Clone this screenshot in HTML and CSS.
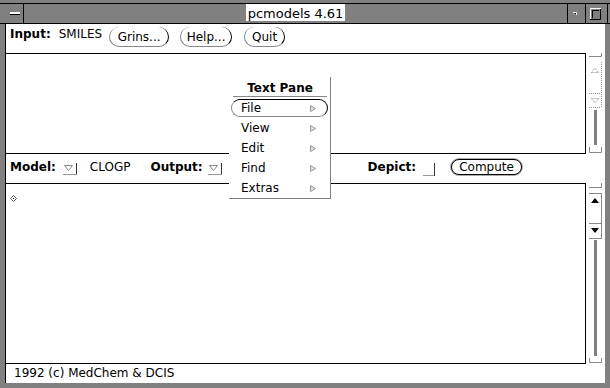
FILE: index.html
```html
<!DOCTYPE html>
<html lang="en">

<head>
  <meta charset="UTF-8">
  <title>pcmodels 4.61</title>
  <link rel="stylesheet" href="styles.css">
</head>

<body>
  <div class="window">
    <div class="titlebar">
      <div class="tb-row">
        <div class="tb-box tb-menu">
          <svg width="23" height="19" viewBox="0 0 23 19">
            <rect x="10" y="8" width="10" height="2" fill="#fff" />
            <line x1="10" y1="10.5" x2="20" y2="10.5" stroke="#000" />
          </svg>
        </div>
        <div class="tb-title"><span>pcmodels 4.61</span></div>
        <div class="tb-box tb-small">
          <svg width="17" height="19" viewBox="0 0 17 19">
            <polyline points="5,8.5 8.5,8.5 8.5,11" fill="none" stroke="#fff" />
            <rect x="7" y="9" width="1" height="1" fill="#000" />
          </svg>
        </div>
        <div class="tb-box tb-full">
          <svg width="21" height="19" viewBox="0 0 21 19">
            <polyline points="4.5,15 4.5,4.5 15,4.5" fill="none" stroke="#fff" />
            <polyline points="14.5,5 14.5,15.5 4,15.5" fill="none" stroke="#000" />
            <polyline points="6.5,14 6.5,6.5 13,6.5" fill="none" stroke="#000" />
          </svg>
        </div>
      </div>
    </div>

    <div class="client">
      <div class="panel panel-input">
        <span class="label">Input:</span>
        <span class="value value-smiles">SMILES</span>
        <button class="btn btn-grins">Grins...</button>
        <button class="btn btn-help">Help...</button>
        <button class="btn btn-quit">Quit</button>
      </div>

      <div class="pane-row pane-row-top">
        <div class="pane"></div>
        <svg class="scrollbar" width="19" height="101" viewBox="0 0 19 101">
          <polyline points="3,3.5 15.5,3.5 15.5,0" fill="none" stroke="#888" />
          <line x1="15.5" y1="9" x2="15.5" y2="55" stroke="#888" stroke-dasharray="1 1" />
          <line x1="3" y1="40.5" x2="15" y2="40.5" stroke="#888" stroke-dasharray="1 1" />
          <line x1="3" y1="54.5" x2="15" y2="54.5" stroke="#888" stroke-dasharray="1 1" />
          <polygon points="5.5,19.5 12.5,19.5 9,15" fill="none" stroke="#888" stroke-dasharray="1 1" />
          <polygon points="5.5,45.5 12.5,45.5 9,50" fill="none" stroke="#888" stroke-dasharray="1 1" />
          <rect x="8" y="57" width="3" height="35" fill="#808080" />
          <polyline points="3.5,94 3.5,99.5 15.5,99.5 15.5,94" fill="none" stroke="#888" />
        </svg>
      </div>

      <div class="panel panel-model">
        <span class="label">Model:</span>
        <svg class="dropdown dropdown-model" width="15" height="13" viewBox="0 0 15 13">
          <polygon points="1.5,2.5 9.5,2.5 5.5,7.5" fill="none" stroke="#888" />
          <line x1="13.5" y1="0" x2="13.5" y2="12" stroke="#333" />
          <line x1="0" y1="11.5" x2="14" y2="11.5" stroke="#999" />
        </svg>
        <span class="value value-clogp">CLOGP</span>
        <span class="label label-output">Output:</span>
        <svg class="dropdown dropdown-output" width="15" height="13" viewBox="0 0 15 13">
          <polygon points="1.5,2.5 9.5,2.5 5.5,7.5" fill="none" stroke="#888" />
          <line x1="13.5" y1="0" x2="13.5" y2="12" stroke="#333" />
          <line x1="0" y1="11.5" x2="14" y2="11.5" stroke="#999" />
        </svg>
        <span class="label label-depict">Depict:</span>
        <svg class="checkbox" width="13" height="13" viewBox="0 0 13 13">
          <line x1="0" y1="12.5" x2="12" y2="12.5" stroke="#999" />
          <line x1="11.5" y1="0" x2="11.5" y2="13" stroke="#333" />
        </svg>
        <button class="btn btn-default">Compute</button>
      </div>

      <div class="pane-row pane-row-bottom">
        <div class="pane">
          <svg class="caret" width="7" height="7" viewBox="0 0 7 7">
            <polygon points="3.5,0.5 6.5,3.5 3.5,6.5 0.5,3.5" fill="#fff" stroke="#555" />
            <rect x="3" y="3" width="1" height="1" fill="#000" />
          </svg>
        </div>
        <svg class="scrollbar" width="19" height="181" viewBox="0 0 19 181">
          <polyline points="3,4.5 15.5,4.5 15.5,0" fill="none" stroke="#888" />
          <line x1="3" y1="10.5" x2="15" y2="10.5" stroke="#888" />
          <line x1="15.5" y1="10" x2="15.5" y2="56" stroke="#888" />
          <line x1="3" y1="40.5" x2="15" y2="40.5" stroke="#888" />
          <line x1="3" y1="55.5" x2="15" y2="55.5" stroke="#888" />
          <polygon points="5,20 13,20 9,15" fill="#000" />
          <polygon points="5,45 13,45 9,50" fill="#000" />
          <rect x="8" y="57" width="3" height="116" fill="#808080" />
          <polyline points="3.5,175 3.5,179.5 15.5,179.5 15.5,175" fill="none" stroke="#888" />
        </svg>
      </div>

      <div class="footer">1992 (c) MedChem &amp; DCIS</div>
    </div>

    <div class="menu">
      <div class="menu-title">Text Pane</div>
      <ul class="menu-items">
        <li class="menu-item selected"><span>File</span><svg width="7" height="7" viewBox="0 0 7 7"><polygon points="0.5,0.5 5.5,3.5 0.5,6.5" fill="#ddd" stroke="#999" /></svg></li>
        <li class="menu-item"><span>View</span><svg width="7" height="7" viewBox="0 0 7 7"><polygon points="0.5,0.5 5.5,3.5 0.5,6.5" fill="#ddd" stroke="#999" /></svg></li>
        <li class="menu-item"><span>Edit</span><svg width="7" height="7" viewBox="0 0 7 7"><polygon points="0.5,0.5 5.5,3.5 0.5,6.5" fill="#ddd" stroke="#999" /></svg></li>
        <li class="menu-item"><span>Find</span><svg width="7" height="7" viewBox="0 0 7 7"><polygon points="0.5,0.5 5.5,3.5 0.5,6.5" fill="#ddd" stroke="#999" /></svg></li>
        <li class="menu-item"><span>Extras</span><svg width="7" height="7" viewBox="0 0 7 7"><polygon points="0.5,0.5 5.5,3.5 0.5,6.5" fill="#ddd" stroke="#999" /></svg></li>
      </ul>
    </div>
  </div>
</body>

</html>
```

FILE: styles.css
```css
body {
  margin: 0;
  font-family: "DejaVu Sans", "Liberation Sans", sans-serif;
  font-size: 12px;
  color: #000;
}

/* window frame: flat mid grey standing in for the 1px dither */
.window {
  position: relative;
  width: 610px;
  height: 388px;
  display: flex;
  flex-direction: column;
  background-color: #808080;
}

/* title bar */

.titlebar {
  height: 24px;
  box-sizing: border-box;
  padding-top: 3px;
  border-bottom: 1px solid #000;
  display: flex;
}

.tb-row {
  flex: 1;
  display: flex;
  border-top: 1px solid #000;
}

.tb-box svg {
  display: block;
}

.tb-menu {
  width: 23px;
  border-right: 1px solid #000;
}

.tb-title {
  flex: 1;
  display: flex;
  justify-content: center;
}

.tb-title span {
  display: block;
  height: 17px;
  box-sizing: border-box;
  padding: 2px 2px 0 2px;
  line-height: 15px;
  font-size: 13px;
  background-color: #fff;
}

.tb-small {
  width: 17px;
  border-left: 1px solid #000;
}

.tb-full {
  width: 21px;
  border-left: 1px solid #000;
  border-right: 1px solid #000;
  margin-right: 2px;
}

/* window body */

.client {
  flex: 1;
  margin: 0 5px 5px 5px;
  border-left: 1px solid #000;
  background-color: #fff;
  display: flex;
  flex-direction: column;
}

.panel {
  height: 29px;
  box-sizing: border-box;
  padding: 3px 0 0 4px;
  display: flex;
  align-items: flex-start;
  line-height: 14px;
  white-space: nowrap;
}

.panel-model {
  padding-top: 6px;
}

.label {
  font-weight: bold;
}

.value-smiles {
  margin-left: 8px;
}

.btn {
  font: inherit;
  color: #000;
  background-color: #fff;
  height: 20px;
  box-sizing: border-box;
  padding: 0;
  line-height: 14px;
  text-align: center;
  border: 1px solid;
  border-top: 0;
  border-color: transparent #000 #888 #888;
  border-radius: 10px;
}

.btn-grins {
  width: 60px;
  margin-left: 7px;
}

.btn-help {
  width: 52px;
  margin-left: 11px;
}

.btn-quit {
  width: 41px;
  margin-left: 12px;
}

.dropdown,
.checkbox {
  display: block;
  margin-top: 3px;
}

.dropdown-model {
  margin-left: 7px;
}

.value-clogp {
  margin-left: 12px;
}

.label-output {
  margin-left: 20px;
}

.dropdown-output {
  margin-left: 5px;
}

.label-depict {
  margin-left: 145px;
}

.checkbox {
  margin-left: 7px;
}

.btn-default {
  width: 71px;
  height: 16px;
  margin: -1px 0 0 15px;
  border: 1px solid #000;
  border-radius: 8px;
  box-shadow: 0 0 0 1px #aaa;
}

/* panes */

.pane-row {
  display: flex;
}

.pane-row-top {
  height: 101px;
}

.pane-row-bottom {
  height: 181px;
}

.pane {
  width: 580px;
  box-sizing: border-box;
  border: 1px solid #000;
  border-left: 0;
}

.scrollbar {
  display: block;
}

.caret {
  display: block;
  margin: 11px 0 0 4px;
}

.footer {
  height: 19px;
  line-height: 19px;
  padding-left: 8px;
}

/* pop-up menu */

.menu {
  position: absolute;
  left: 229px;
  top: 77px;
  width: 102px;
  box-sizing: border-box;
  background-color: #fff;
  border-right: 1px solid #808080;
  border-bottom: 1px solid #808080;
}

.menu-title {
  margin: 0 3px 0 4px;
  padding: 4px 0 1px 0;
  line-height: 14px;
  font-weight: bold;
  text-align: center;
  border-bottom: 1px solid #888;
}

.menu-items {
  list-style: none;
  margin: 1px 0 0 0;
  padding: 0;
}

.menu-item {
  height: 18px;
  box-sizing: border-box;
  margin: 2px 2px 1px 2px;
  padding: 0 10px 0 9px;
  line-height: 16px;
  display: flex;
  align-items: center;
  justify-content: space-between;
  border: 1px solid transparent;
  border-radius: 9px;
}

.menu-item span {
  line-height: 16px;
}

.menu-item svg {
  display: block;
}

.menu-item.selected {
  border-color: #000 #000 #888 #888;
}
```
